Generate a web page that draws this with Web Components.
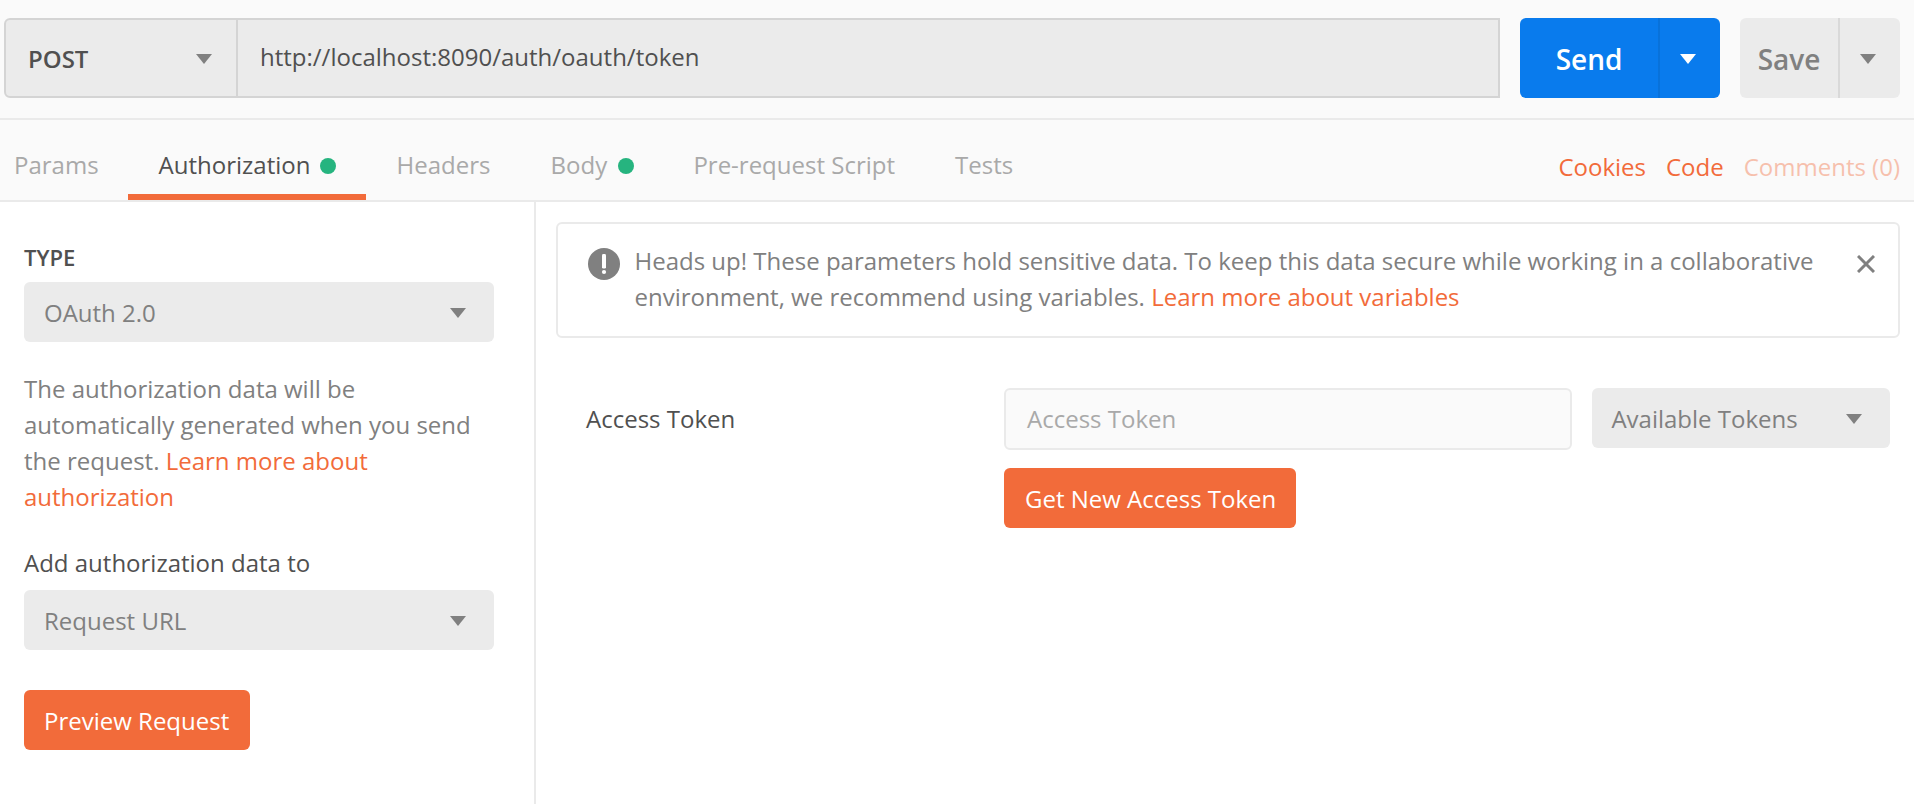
<!DOCTYPE html>
<html lang="en">
<head>
<meta charset="utf-8">
<title>Request builder</title>
<style>
  html, body { margin: 0; height: 100%; }
  body {
    font: 24px/36px "Open Sans", "Noto Sans", sans-serif;
    color: #505050; background: #fff; overflow: hidden;
    --orange: #f26b3a; --blue: #097bed; --green: #26b47f;
    --muted: #808080; --faint: #a9a9a9;
    --fill: #ebebeb; --line: #eaeaea; --edge: #d4d4d4; --bar: #fafafa;
  }
</style>
</head>
<body>
<request-app></request-app>
<script>
const define = (name, html) => {
  const tpl = document.createElement('template');
  tpl.innerHTML = html;
  customElements.define(name, class extends HTMLElement {
    constructor() {
      super();
      this.attachShadow({ mode: 'open' }).append(tpl.content.cloneNode(true));
    }
  });
};

define('caret-icon', `
  <style>:host{display:block;width:16px;height:10px;flex:none}svg{display:block}</style>
  <svg width="16" height="10" viewBox="0 0 16 10"><path fill="currentColor" d="M0 0h16L8 10z"/></svg>`);

define('method-url', `
  <style>
    :host{display:flex;box-sizing:border-box;height:80px;width:1496px;background:var(--fill);
      border:2px solid var(--edge);border-radius:6px 0 0 6px;line-height:76px}
    .method{box-sizing:border-box;width:232px;border-right:2px solid var(--edge);display:flex;align-items:center;
      justify-content:space-between;padding:0 24px 0 22px;font-weight:600}
    caret-icon{color:var(--muted);margin-top:1px}
    .method span{padding-top:1px;line-height:73px}
    .url{padding-left:22px;line-height:74px}
  </style>
  <div class="method"><span><slot name="method"></slot></span><caret-icon></caret-icon></div>
  <div class="url"><slot></slot></div>`);

define('split-button', `
  <style>
    :host{display:flex;height:80px;border-radius:6px;overflow:hidden;font-size:28px;font-weight:600;
      line-height:82px;background:var(--fill);color:var(--muted)}
    :host([primary]){background:var(--blue);color:#fff}
    .main{width:98px;text-align:center}
    :host([primary]) .main{width:138px}
    .more{box-sizing:border-box;width:62px;border-left:2px solid #d9d9d9;padding:36px 0 0 20px}
    :host([primary]) .more{border-color:#0872db}
  </style>
  <div class="main"><slot></slot></div><div class="more"><caret-icon></caret-icon></div>`);

define('request-bar', `
  <style>:host{display:flex;box-sizing:border-box;height:120px;padding:18px 14px 0 4px;gap:20px;
    background:var(--bar);border-bottom:2px solid var(--line)}</style>
  <method-url><span slot="method">POST</span>http://localhost:8090/auth/oauth/token</method-url>
  <split-button primary>Send</split-button>
  <split-button>Save</split-button>`);

define('tab-item', `
  <style>
    :host{display:flex;align-items:center;box-sizing:border-box;height:80px;padding:16px 30px 0;
      color:var(--faint);border-bottom:6px solid transparent;white-space:nowrap}
    :host([active]){color:#505050;border-color:var(--orange)}
    i{display:none;flex:none;width:16px;height:16px;border-radius:50%;background:var(--green);margin:2px 0 0 auto}
    :host([dot]) i{display:block}
  </style>
  <slot></slot><i></i>`);

define('tab-bar', `
  <style>
    :host{display:flex;justify-content:space-between;box-sizing:border-box;height:82px;
      background:var(--bar);border-bottom:2px solid var(--line);padding-right:14px}
    nav{display:flex;margin-left:-16px}
    tab-item:first-child{width:144px}
    tab-item:nth-child(2){width:238px;padding-left:30.6px}
    tab-item:nth-child(3){width:154px;padding-left:30.6px}
    tab-item:nth-child(4){width:144px;padding-left:30.6px}
    tab-item:nth-child(5){padding-left:29.4px}
    .links{display:flex;gap:20px;color:var(--orange);padding-top:29px}
    .off{opacity:.4}
  </style>
  <nav>
    <tab-item>Params</tab-item><tab-item active dot>Authorization</tab-item><tab-item>Headers</tab-item>
    <tab-item dot>Body</tab-item><tab-item>Pre-request Script</tab-item><tab-item>Tests</tab-item>
  </nav>
  <div class="links"><span>Cookies</span><span>Code</span><span class="off">Comments (0)</span></div>`);

define('select-box', `
  <style>:host{display:flex;justify-content:space-between;align-items:center;box-sizing:border-box;height:60px;
    padding:0 28px 0 20px;border-radius:6px;background:var(--fill);color:var(--muted);line-height:60px}
    span{padding-top:1px;line-height:59px}
    caret-icon{margin-top:2px}</style>
  <span><slot></slot></span><caret-icon></caret-icon>`);

define('action-button', `
  <style>:host{display:block;box-sizing:border-box;height:60px;line-height:61px;padding:0 0 0 20px;
    border-radius:6px;background:var(--orange);color:#fff}</style>
  <slot></slot>`);

define('text-link', `<style>:host{color:var(--orange)}</style><slot></slot>`);

define('auth-sidebar', `
  <style>
    :host{display:block;box-sizing:border-box;width:536px;padding:37px 40px 0 24px;border-right:2px solid var(--line)}
    h4{margin:0 0 7px;font-size:22px;font-weight:600;line-height:36px}
    p{margin:29px 0 30px;color:var(--muted)}
    label{display:block;margin-bottom:9px}
    action-button{margin-top:40px;width:226px}
  </style>
  <h4>TYPE</h4>
  <select-box>OAuth 2.0</select-box>
  <p>The authorization data will be automatically generated when you send the request. <text-link>Learn more about</text-link> <text-link>authorization</text-link></p>
  <label>Add authorization data to</label>
  <select-box>Request URL</select-box>
  <action-button>Preview Request</action-button>`);

define('notice-box', `
  <style>
    :host{display:flex;box-sizing:border-box;height:116px;border:2px solid var(--line);border-radius:6px;
      padding:19px 23px 0 30px;color:var(--muted)}
    svg{display:block;flex:none}
    .info{margin:5px 14.5px 0 0}
    .close{margin-top:12px}
    .text{flex:1}
  </style>
  <svg class="info" width="32" height="32" viewBox="0 0 32 32"><circle cx="16" cy="16" r="16" fill="#808080"/>
    <rect x="14" y="6" width="4" height="14.6" rx="1.4" fill="#fff"/><circle cx="16" cy="24" r="2.1" fill="#fff"/></svg>
  <div class="text"><slot></slot></div>
  <svg class="close" width="18" height="18" viewBox="0 0 18 18"><path d="M1 1l16 16M17 1L1 17" stroke="#808080" stroke-width="3"/></svg>`);

define('token-form', `
  <style>
    :host{display:grid;grid-template-columns:418px 568px 318px;column-gap:0;row-gap:18px;
      margin:50px 0 0 30px;align-items:start}
    label{line-height:62px}
    .field{box-sizing:border-box;height:62px;line-height:58px;border:2px solid var(--line);border-radius:6px;
      background:var(--bar);color:var(--faint);padding-left:21px}
    select-box{margin-left:20px;width:298px;padding-left:19.4px}
    action-button{grid-column:2;width:292px;padding-left:21px}
  </style>
  <label>Access Token</label>
  <div class="field">Access Token</div>
  <select-box>Available Tokens</select-box>
  <action-button>Get New Access Token</action-button>`);

define('auth-content', `
  <style>:host{display:block;flex:1;padding:20px 14px 0 20px}</style>
  <notice-box>Heads up! These parameters hold sensitive data. To keep this data secure while working in a collaborative<br>environment, we recommend using variables. <text-link>Learn more about variables</text-link></notice-box>
  <token-form></token-form>`);

define('request-app', `
  <style>:host{display:flex;flex-direction:column;height:100vh}main{display:flex;flex:1}</style>
  <request-bar></request-bar>
  <tab-bar></tab-bar>
  <main><auth-sidebar></auth-sidebar><auth-content></auth-content></main>`);
</script>
</body>
</html>
